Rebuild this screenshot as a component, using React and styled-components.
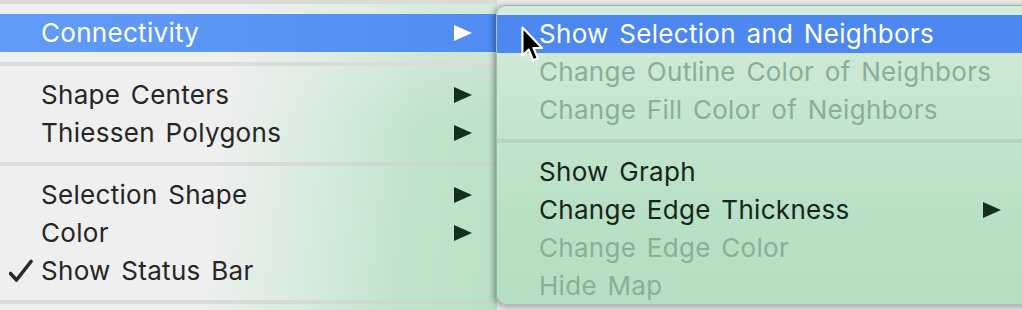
import React from 'react';
import styled, { createGlobalStyle } from 'styled-components';

const Global = createGlobalStyle`
    html, body {
        margin: 0;
        padding: 0;
        background: #ececec;
        overflow: hidden;
    }
    body {
        font-family: Inter, "Noto Sans", "Liberation Sans", sans-serif;
        -webkit-font-smoothing: antialiased;
    }
`

const Stage = styled.div`
    position: relative;
    width: 1022px;
    height: 310px;
    overflow: hidden;
`

const Menu = styled.div`
    width: 497px;
    height: 310px;
    display: flex;
    flex-direction: column;
    background:
        linear-gradient(180deg, rgba(239, 239, 239, 0.55) 0px, rgba(239, 239, 239, 0) 120px),
        linear-gradient(97deg, #efefef 0%, #efefef 44%, #d9ece0 62%, #c3e4cc 80%, #b9e1c5 100%);
`

// the submenu pops over the parent menu
const SubMenu = styled.div`
    position: absolute;
    left: 496px;
    top: 5px;
    width: 540px;
    height: 300px;
    box-sizing: border-box;
    padding-top: 9px;
    display: flex;
    flex-direction: column;
    border-radius: 10px;
    border: 1px solid rgba(60, 90, 70, 0.28);
    background: linear-gradient(180deg, #d6ecdc 0%, #c6e6cf 35%, #b8e0c4 70%, #b5dfc2 100%);
    box-shadow: -3px 0 5px rgba(0, 0, 0, 0.22), 0 4px 8px rgba(0, 0, 0, 0.18);
`

const Separator = styled.div`
    padding: ${p => (p.$first ? '0 0 10px' : '10px 0')};
    &::before {
        content: '';
        display: block;
        height: 4px;
        background: ${p => p.$line};
    }
`

const Row = styled.div`
    height: 38px;
    flex-shrink: 0;
    display: flex;
    align-items: center;
    padding-right: ${p => p.$right}px;
    font-size: 26px;
    letter-spacing: 0.3px;
    word-spacing: 3px;
    color: ${p => (p.$active ? '#ffffff' : p.$disabled ? '#8aaf96' : p.$ink)};
    background: ${p => (p.$active ? p.$hl : 'transparent')};
`

const Gutter = styled.span`
    width: ${p => p.$w}px;
    flex-shrink: 0;
    display: flex;
    align-items: center;
    justify-content: flex-start;
    padding-left: 9px;
    box-sizing: border-box;
`

const Label = styled.span`
    flex: 1;
    white-space: nowrap;
    line-height: 38px;
`

const Arrow = styled.span`
    width: 0;
    height: 0;
    border-top: 8.5px solid transparent;
    border-bottom: 8.5px solid transparent;
    border-left: 18px solid ${p => (p.$active ? '#ffffff' : '#15301a')};
`

const Cursor = styled.svg`
    position: absolute;
    left: 520px;
    top: 26px;
`

function Check() {
    return (
        <svg width="24" height="24" viewBox="0 0 24 24">
            <path d="M1.5 14.5 L7.5 21 L22 2.5" fill="none" stroke="#2a2a2a" strokeWidth="3.6" strokeLinecap="round" strokeLinejoin="round" />
        </svg>
    );
}

const HL_MAIN = 'linear-gradient(90deg, #629cf7 0%, #5a95f5 50%, #508bf1 100%)';
const HL_SUB = '#4c88ef';

function Item({ label, active, disabled, arrow, check, gutter, right, ink, hl }) {
    return (
        <Row $active={active} $disabled={disabled} $right={right} $ink={ink} $hl={hl}>
            <Gutter $w={gutter}>{check && <Check />}</Gutter>
            <Label>{label}</Label>
            {arrow && <Arrow $active={active} />}
        </Row>
    );
}

const mainItem = { gutter: 41, right: 25, ink: '#262626', hl: HL_MAIN };
const subItem = { gutter: 42, right: 34, ink: '#15261a', hl: HL_SUB };

function App() {
    return (
        <Stage>
            <Global />
            <Menu>
                <Separator $first $line="#d9dbd9" />
                <Item {...mainItem} label="Connectivity" arrow active />
                <Separator $line="#dadcda" />
                <Item {...mainItem} label="Shape Centers" arrow />
                <Item {...mainItem} label="Thiessen Polygons" arrow />
                <Separator $line="linear-gradient(90deg, #dcdcdc 40%, #c4d9ca 100%)" />
                <Item {...mainItem} label="Selection Shape" arrow />
                <Item {...mainItem} label="Color" arrow />
                <Item {...mainItem} label="Show Status Bar" check />
                <Separator $line="linear-gradient(90deg, #dcdcdc 40%, #c0d8c6 100%)" />
            </Menu>
            <SubMenu>
                <Item {...subItem} label="Show Selection and Neighbors" active />
                <Item {...subItem} label="Change Outline Color of Neighbors" disabled />
                <Item {...subItem} label="Change Fill Color of Neighbors" disabled />
                <Separator $line="#b6d6be" />
                <Item {...subItem} label="Show Graph" />
                <Item {...subItem} label="Change Edge Thickness" arrow />
                <Item {...subItem} label="Change Edge Color" disabled />
                <Item {...subItem} label="Hide Map" disabled />
            </SubMenu>
            <Cursor width="26" height="38" viewBox="0 0 24 36">
                <path d="M2 1.5 L2 28 L8 22.3 L12.2 32.5 L16.6 30.6 L12.4 20.8 L20.6 20.8 Z" fill="#000" stroke="#fff" strokeWidth="2" strokeLinejoin="round" />
            </Cursor>
        </Stage>
    );
}

export default App;
